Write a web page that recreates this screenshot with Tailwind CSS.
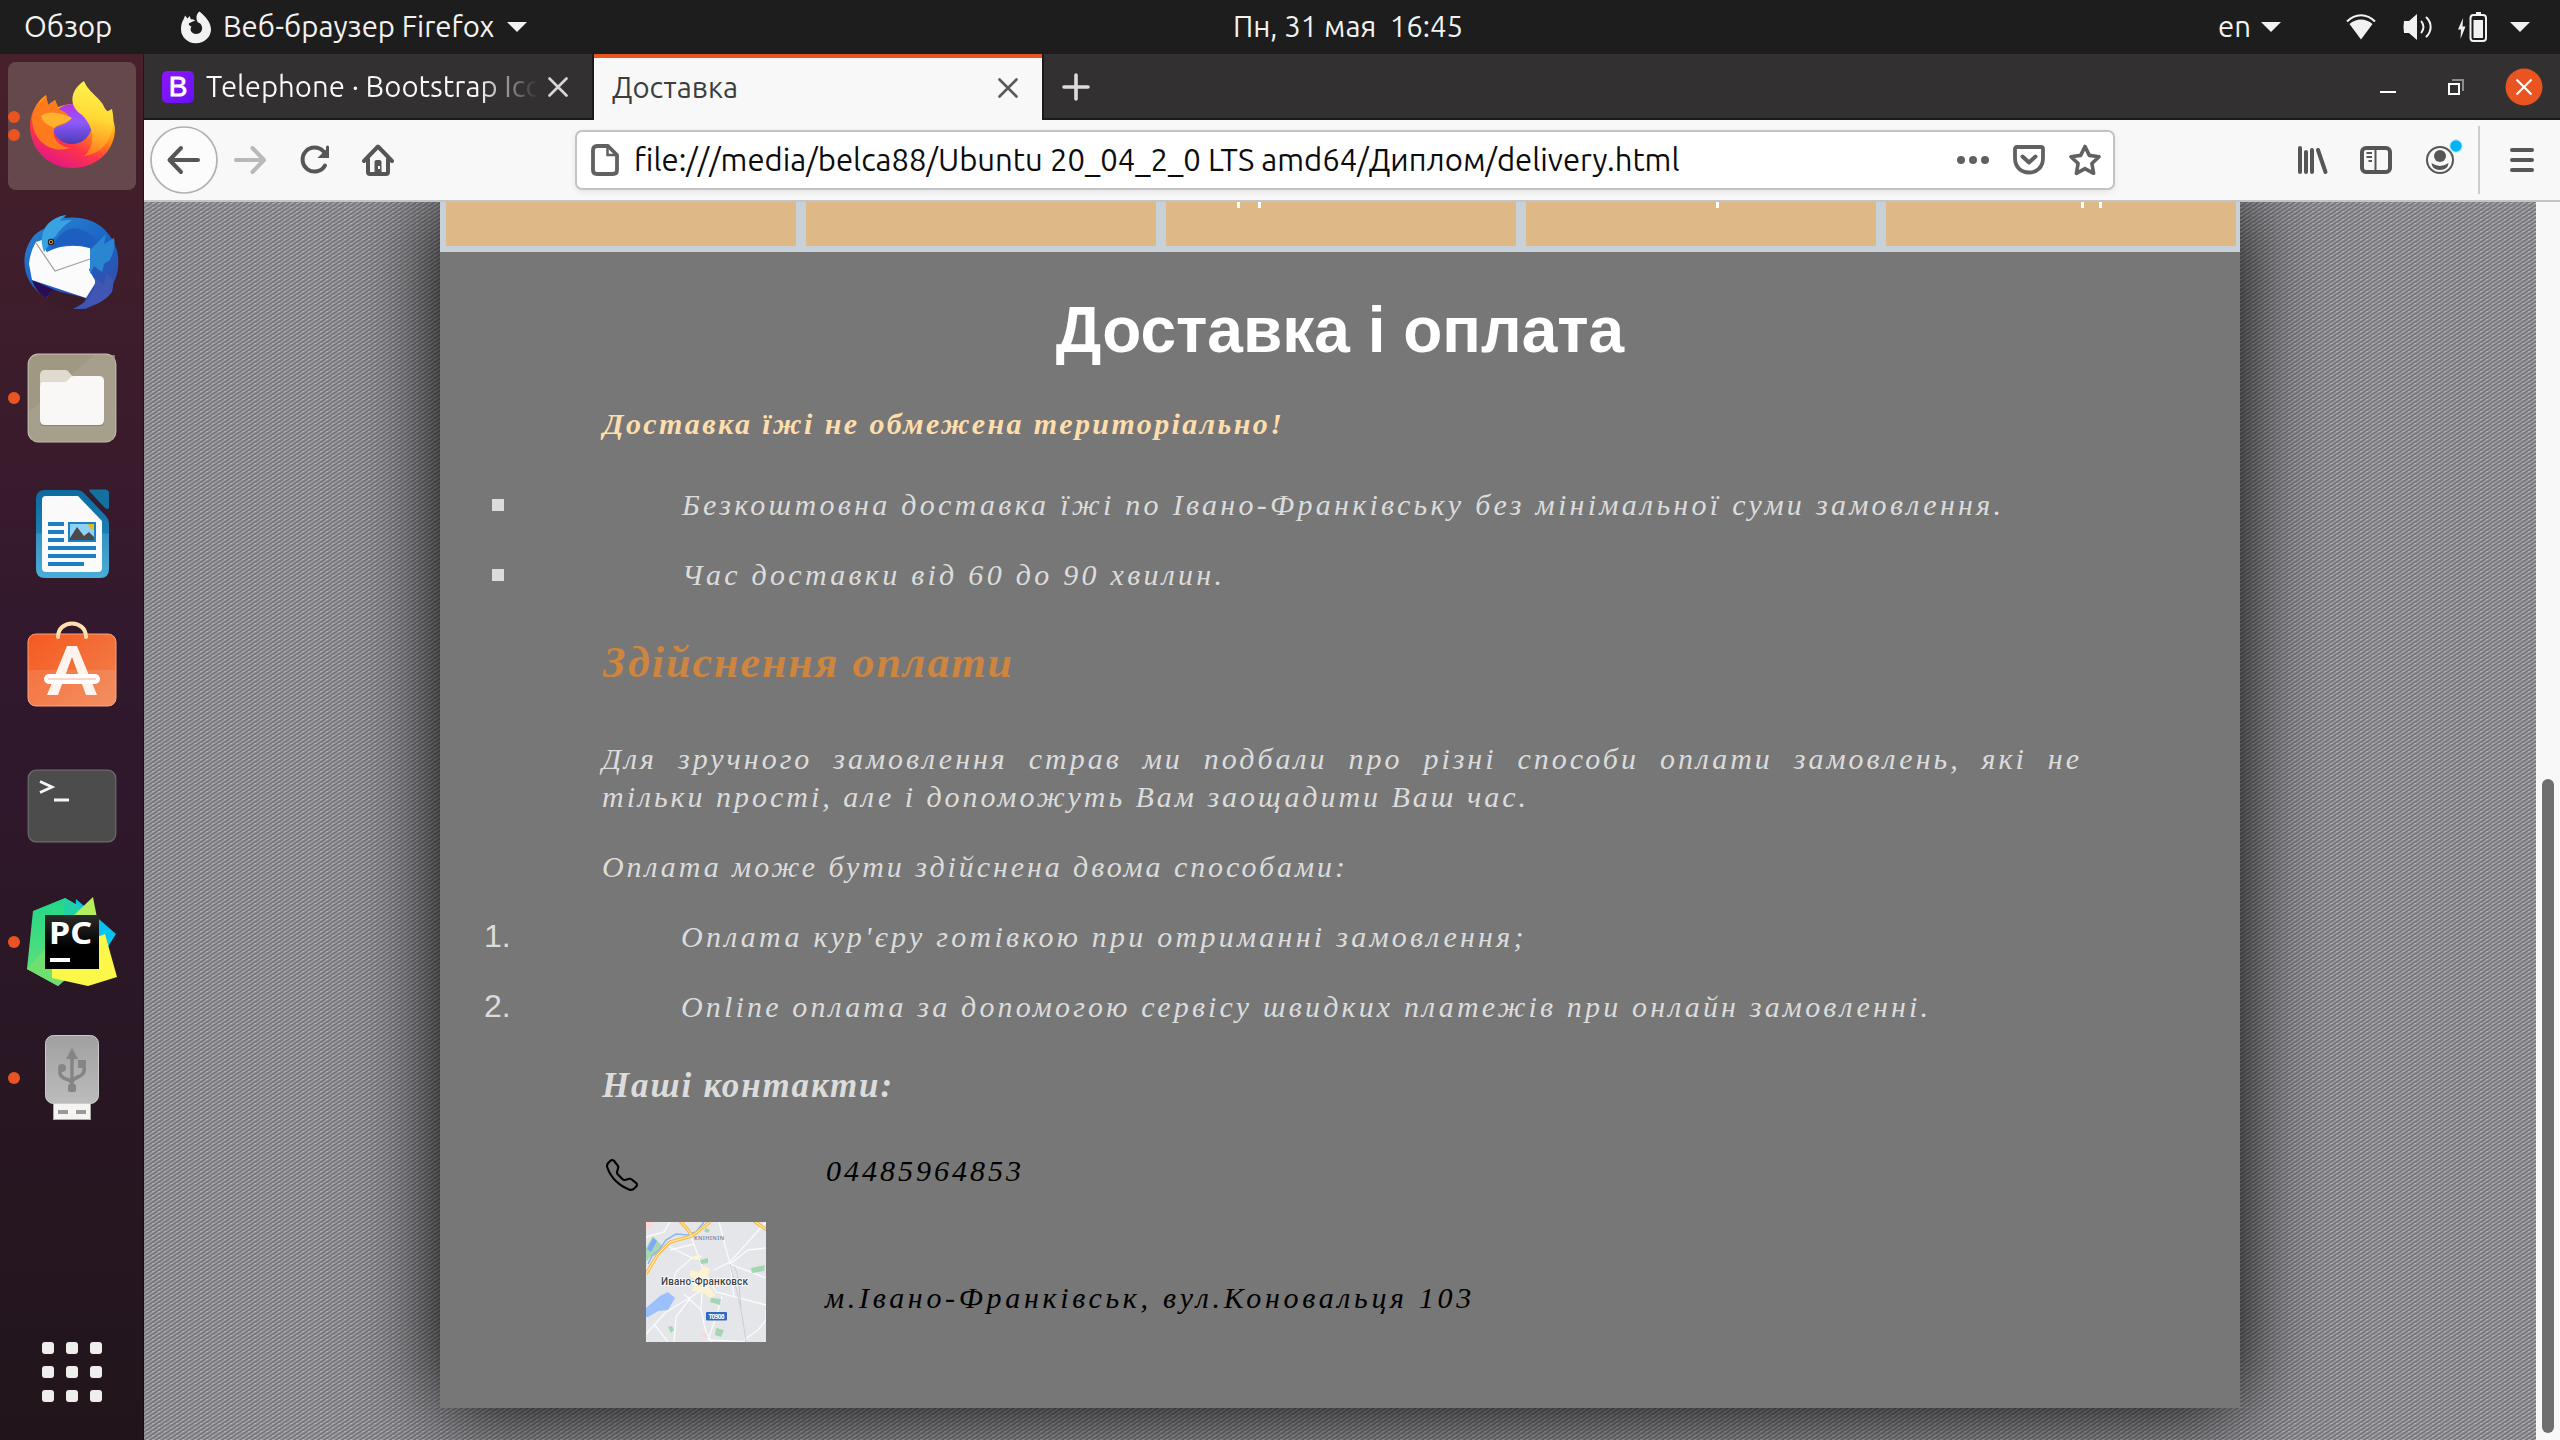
<!DOCTYPE html>
<html lang="uk">
<head>
<meta charset="utf-8">
<title>Доставка</title>
<script src="https://cdn.jsdelivr.net/npm/@tailwindcss/browser@4"></script>
</head>
<body class="w-[2560px] h-[1440px] overflow-hidden bg-black font-['Ubuntu','Noto_Sans',sans-serif] text-[29.33px]">
<div class="flex flex-col w-[2560px] h-[1440px]">

<!-- System bar -->
<header class="relative flex items-center justify-between h-[54px] shrink-0 bg-[#1d1d1d] text-[#f2f2f2] leading-[54px] whitespace-pre">
  <div class="flex items-center pl-[24px]">
    <span class="w-[156px]">Обзор</span>
    <svg class="w-[32px] h-[34px]" viewBox="0 0 32 34"><path fill="#f2f2f2" d="M19.500 1.500C25 6 31 12 31 19.500A15 14 0 0 1 1 19C1 14 2.500 11 4 8.500L5 5.500L7.500 8.500L9.500 6L11 9.500C13 9 14.500 10 15 11C12.500 11 11.500 12.500 9.500 13C7.500 14 10 16 11.500 16.500C9 20 12 24 16 24C21 24 24 19 21 14.500C20 13 18.500 12.500 18 12.500C15.500 9 16 4 19.500 1.500Z"/></svg>
    <span class="ml-[11px] w-[274px]">Веб-браузер Firefox</span>
    <svg class="ml-[10px] w-[20px] h-[10px]" viewBox="0 0 20 10"><path fill="#f2f2f2" d="M0 0H20L10 10Z"/></svg>
  </div>
  <div class="absolute left-[1233px]">Пн, 31 мая  16:45</div>
  <div class="flex items-center pr-[30px]">
    <span class="w-[43px]">en</span>
    <svg class="w-[20px] h-[10px]" viewBox="0 0 20 10"><path fill="#f2f2f2" d="M0 0H20L10 10Z"/></svg>
    <svg class="ml-[64px] w-[32px] h-[26px]" viewBox="0 0 32 26"><path fill="none" stroke="#f2f2f2" stroke-width="2" d="M2 7.500C10 -1 22 -1 30 7.500"/><path fill="#f2f2f2" d="M4.500 10C11 4 21 4 27.500 10L16 25.500Z"/></svg>
    <svg class="ml-[26px] w-[30px] h-[28px]" viewBox="0 0 30 28"><path fill="#f2f2f2" d="M1 8H6L14 1V27L6 20H1Q0 14 1 8Z"/><path fill="none" stroke="#f2f2f2" stroke-width="2" stroke-linecap="round" d="M18.500 8.500C21 12 21 16 18.500 19.500M23.500 4.500C29 10 29 18 23.500 23.500"/></svg>
    <svg class="ml-[25px] w-[30px] h-[30px]" viewBox="0 0 30 30"><path fill="#f2f2f2" d="M5 6L0 17.500H3L2.500 27L7.500 14.500H4.500ZM18 0H23V3H18Z"/><rect x="12.500" y="3" width="15.500" height="26" rx="3" fill="none" stroke="#f2f2f2" stroke-width="2"/><rect x="15.500" y="8" width="9.500" height="18" fill="#f2f2f2"/></svg>
    <svg class="ml-[22px] w-[20px] h-[10px]" viewBox="0 0 20 10"><path fill="#f2f2f2" d="M0 0H20L10 10Z"/></svg>
  </div>
</header>

<div class="flex flex-1 min-h-0">
<!-- Dock -->
<aside class="flex flex-col w-[144px] shrink-0 pt-1 bg-linear-to-b from-[#47202a] via-[#31182d] via-45% to-[#21151b] border-r border-black/40">
  <div class="relative flex items-center h-[136px] pl-[24px]">
    <div class="absolute left-[8px] top-[4px] w-[128px] h-[128px] rounded-[8px] bg-[#65484c]"></div>
    <div class="absolute left-[8px] top-[53px] size-[12px] rounded-full bg-[#e95420]"></div>
    <div class="absolute left-[8px] top-[71px] size-[12px] rounded-full bg-[#e95420]"></div>
    <svg class="relative size-[96px]" viewBox="0 0 96 96">
      <defs>
        <linearGradient id="fa" x1=".85" y1=".1" x2=".3" y2="1"><stop offset="0" stop-color="#fff44f"/><stop offset=".35" stop-color="#ff980e"/><stop offset=".65" stop-color="#ff3647"/><stop offset="1" stop-color="#e31587"/></linearGradient>
        <linearGradient id="fb" x1=".5" y1="0" x2=".5" y2="1"><stop offset="0" stop-color="#b833e1"/><stop offset=".45" stop-color="#9059ff"/><stop offset="1" stop-color="#4b3cb5"/></linearGradient>
        <linearGradient id="fc" x1=".6" y1="0" x2=".5" y2="1"><stop offset="0" stop-color="#fff44f"/><stop offset=".5" stop-color="#ffd935"/><stop offset="1" stop-color="#ff7a1c"/></linearGradient>
      </defs>
      <path fill="url(#fa)" d="M6 48C6 36 12 24 22 17L24 27L31 22L34 29C44 25 60 24 70 30L76 26C88 36 91 44 91 52C90 75 70 90 49 90C25 90 6 72 6 48Z"/>
      <circle cx="48" cy="46" r="20" fill="url(#fb)"/>
      <path fill="url(#fc)" d="M60 3C65 16 79 20 82 34L88 31C94 56 80 76 60 78C70 70 73 52 58 37C44 28 46 12 60 3Z"/>
      <path fill="#ff7a1c" d="M8 40C10 28 20 23 22 17L24 27L31 22L34 31C38 32 43 35 47 40C41 49 34 46 30 51C28 60 34 68 46 70C28 76 8 64 8 40Z"/>
      <path fill="#ffb32e" d="M17 38C24 32 36 34 48 40C42 47 34 45 30 50C24 47 18 44 17 38Z"/>
    </svg>
  </div>
  <div class="relative flex items-center h-[136px] pl-[24px]">
    <svg class="size-[96px]" viewBox="0 0 96 96">
      <defs><linearGradient id="ta" x1=".2" y1="0" x2=".8" y2="1"><stop offset="0" stop-color="#2a83d0"/><stop offset=".5" stop-color="#1b62c4"/><stop offset="1" stop-color="#3a48a3"/></linearGradient></defs>
      <path fill="url(#ta)" d="M24 10Q30 3 42 1L40 4Q80 0 93 36Q101 74 62 95H49Q58 91 60 87L22 84Q-3 68 1 40Q6 20 20 15Z"/>
      <path fill="#2a0d55" d="M8 66L40 80L60 86L28 77L22 84Q12 78 8 66Z"/>
      <path fill="#3b1c2a" d="M22 85L28 76L62 84L60 89L48 96Q33 96 22 85Z"/>
      <path fill="#3c2a93" d="M30 36Q48 28 64 34L68 40Z"/>
      <path fill="#fbfbfc" d="M12 28L18 26Q21 36 23 38Q42 28 66 34Q70 48 65 56L72 68L62 84L8 66L5 50Q6 38 12 28Z"/>
      <path fill="none" stroke="#a2a2a6" stroke-width="1.300" d="M12 29L31 57L66 45"/>
      <path fill="#38a3e0" d="M20 38Q14 22 24 10Q31 3 42 1Q37 4 36 7Q42 6 48 6Q36 14 32 22Q26 26 24 32Z"/>
      <path fill="#1d5fc0" d="M32 26Q44 10 58 16Q72 22 84 38L74 50L66 34Q46 26 26 36Z"/>
      <path fill="#2b86d2" d="M66 36L82 20L80 30L90 24Q92 34 86 46L80 50L78 58L70 52L66 60Z"/>
      <path fill="#3f57b2" d="M66 82Q72 74 71 64L80 70L82 60Q92 62 88 78Q76 94 49 95Q60 90 66 82Z"/>
      <circle cx="27" cy="28" r="3.200" fill="#1a1320"/><circle cx="27" cy="28" r="1.800" fill="none" stroke="#e8a120" stroke-width="1"/>
    </svg>
  </div>
  <div class="relative flex items-center h-[136px] pl-[24px]">
    <div class="absolute left-[8px] top-[62px] size-[12px] rounded-full bg-[#e95420]"></div>
    <svg class="size-[96px]" viewBox="0 0 96 96">
      <rect x="4.200" y="4.200" width="87.600" height="87.600" rx="10" fill="#9f9883" stroke="#c4bfae" stroke-width="1.200"/>
      <path fill="#aaa38f" d="M91 5H70L5 62V84Q6 91 14 91H84Q91 90 91 83Z" opacity=".7"/>
      <path fill="#6f6856" opacity=".5" d="M16 68V72Q16 76 20 76H76Q80 76 80 72V68Z"/>
      <path fill="#dfdccf" d="M16 34V25Q16 20 21 20H41Q43 20 44 21L49 27V34Z"/>
      <path fill="#f9f8f7" d="M16 36Q16 32 20 32H40Q42 32 43 31L47 27Q48 26 50 26H75Q80 26 80 31V70Q80 75 75 75H21Q16 75 16 70Z"/>
    </svg>
  </div>
  <div class="relative flex items-center h-[136px] pl-[24px]">
    <svg class="size-[96px]" viewBox="0 0 96 96">
      <defs><linearGradient id="wa" x1="0" y1="0" x2="0" y2="1"><stop offset="0" stop-color="#0d6a9f"/><stop offset=".49" stop-color="#1a7fb3"/><stop offset=".5" stop-color="#3692c2"/><stop offset="1" stop-color="#49add9"/></linearGradient></defs>
      <path fill="url(#wa)" d="M12 13Q12 4 21 4H52Q57 4 60 7L81 29Q85 33 85 38V83Q85 92 76 92H21Q12 92 12 83Z"/>
      <path fill="#13709f" d="M66 3.500H81Q85 3.500 85 7.500V22Q84 24 81 22L66 6Q64 4 66 3.500Z"/>
      <path fill="#fafafa" d="M18 14Q18 10 22 10H54L78 35V82Q78 86 74 86H22Q18 86 18 82Z"/>
      <g fill="#1b81c0"><path d="M24 36H40V40H24ZM24 44H40V48H24ZM24 52H40V56H24ZM24 60H72V64H24ZM24 68H72V72H24ZM24 76H60V80H24ZM44 36H72V56H44Z"/></g>
      <path fill="#8fd0f5" d="M46 38H70V54H46Z"/><path fill="#e8b90e" d="M64 38H70V44Q65 43 64 38Z"/><path fill="#4a4a4a" d="M46 54V52L53 41L60 50L65 46L70 51V54Z"/>
    </svg>
  </div>
  <div class="relative flex items-center h-[136px] pl-[24px]">
    <svg class="size-[96px] overflow-visible" viewBox="0 0 96 96">
      <defs><linearGradient id="sa" x1="0" y1="0" x2="1" y2="1"><stop offset="0" stop-color="#f55a20"/><stop offset="1" stop-color="#f18350"/></linearGradient></defs>
      <rect x="4" y="12" width="88" height="72" rx="8" fill="url(#sa)" stroke="#f9a27c" stroke-width="1"/>
      <path fill="#fff" opacity=".1" d="M4 48H92V77Q92 84 85 84H11Q4 84 4 77Z"/>
      <path fill="none" stroke="#fde0b0" stroke-width="4" stroke-linecap="round" d="M34 15C34 -3 62 -3 62 15"/>
      <path fill="#fdf4ee" d="M43 24H53L73 73H62L48 35L34 73H23Z"/>
      <rect x="20" y="52" width="56" height="10" rx="5" fill="#fff"/><rect x="24" y="56" width="48" height="2" fill="#fbd5c9"/>
    </svg>
  </div>
  <div class="relative flex items-center h-[136px] pl-[24px]">
    <svg class="size-[96px]" viewBox="0 0 96 96">
      <rect x="4.200" y="12.200" width="87.600" height="71.600" rx="8" fill="#4c4c4c" stroke="#6c6c6c" stroke-width="1.200"/>
      <path fill="none" stroke="#f6f6f6" stroke-width="2.800" d="M16 23.500L28 29L16 34.500M30 42H45"/>
    </svg>
  </div>
  <div class="relative flex items-center h-[136px] pl-[24px]">
    <div class="absolute left-[8px] top-[62px] size-[12px] rounded-full bg-[#e95420]"></div>
    <svg class="size-[96px]" viewBox="0 0 96 96">
      <defs><linearGradient id="pa" x1="0" y1="0" x2="0" y2="1"><stop offset="0" stop-color="#21d789"/><stop offset="1" stop-color="#68e177"/></linearGradient><linearGradient id="pb" x1="0" y1="0" x2="0" y2="1"><stop offset="0" stop-color="#2b2b2b"/><stop offset=".6" stop-color="#000"/></linearGradient></defs>
      <path fill="#07c3f2" d="M52 5L92 40L78 62L50 50Z"/>
      <path fill="url(#pa)" d="M9 17L41 4L60 15V70L34 92L3 75Z"/>
      <path fill="#22d0a8" d="M41 4L60 15L52 24L40 22Z"/>
      <path fill="#b5f05c" d="M69 3L73 24V40H38L49 22Z"/><path fill="#6fe070" d="M3 75L22 54L40 86L34 92Z"/>
      <path fill="#fcf84a" d="M81 40L93 83L64 92L28 84V60Z"/>
      <rect x="21" y="21" width="54" height="54" fill="url(#pb)"/><rect x="26" y="64" width="20" height="4" fill="#fff"/>
      <text x="25" y="50" font-family="Noto Sans" font-weight="700" font-size="31" textLength="43" lengthAdjust="spacingAndGlyphs" fill="#fff">PC</text>
    </svg>
  </div>
  <div class="relative flex items-center h-[136px] pl-[24px]">
    <div class="absolute left-[8px] top-[62px] size-[12px] rounded-full bg-[#e95420]"></div>
    <svg class="size-[96px]" viewBox="0 0 96 96">
      <defs><linearGradient id="ua" x1="0" y1="0" x2="0" y2="1"><stop offset="0" stop-color="#a0a0a0"/><stop offset="1" stop-color="#bcbcbc"/></linearGradient></defs>
      <rect x="29.500" y="70" width="37" height="19.500" fill="#f5f4f2" stroke="#aaa" stroke-width="1"/>
      <path fill="#999" d="M34 80H44V84H34ZM52 80H62V84H52Z"/>
      <rect x="21.500" y="5.500" width="53" height="68" rx="8" fill="url(#ua)" stroke="#ccc"/>
      <g fill="#858585"><path d="M48 18L54 29H42Z"/><circle cx="38" cy="38" r="4"/><path d="M54 30H62V38H54Z"/><rect x="44" y="54" width="8" height="8" rx="2"/></g>
      <path fill="none" stroke="#858585" stroke-width="3.500" d="M48 27V56M36 40Q35 47 42 49Q47 50 48 54M60 36Q62 44 54 47Q49 49 48 52"/>
    </svg>
  </div>
  <div class="grid grid-cols-3 gap-[12px] w-[60px] ml-[42px] mt-[196px]">
    <i class="size-[12px] rounded-[3px] bg-[#eeeeec]"></i><i class="size-[12px] rounded-[3px] bg-[#eeeeec]"></i><i class="size-[12px] rounded-[3px] bg-[#eeeeec]"></i>
    <i class="size-[12px] rounded-[3px] bg-[#eeeeec]"></i><i class="size-[12px] rounded-[3px] bg-[#eeeeec]"></i><i class="size-[12px] rounded-[3px] bg-[#eeeeec]"></i>
    <i class="size-[12px] rounded-[3px] bg-[#eeeeec]"></i><i class="size-[12px] rounded-[3px] bg-[#eeeeec]"></i><i class="size-[12px] rounded-[3px] bg-[#eeeeec]"></i>
  </div>
</aside>

<!-- Browser window -->
<div class="flex flex-col flex-1 min-w-0">
  <!-- Tabs -->
  <div class="flex h-[66px] shrink-0 bg-[#323031] leading-[64px] whitespace-nowrap">
    <div class="flex items-center w-[450px] pl-[18px] pt-[2px] border-b-2 border-r-2 border-[#1b1a1b]">
      <div class="flex items-center justify-center size-[32px] rounded-[5px] bg-linear-to-br from-[#9013fe] to-[#6610f2] text-white font-['Liberation_Sans'] text-[28px] [-webkit-text-stroke:0.800px_#fff]">B</div>
      <div class="ml-[12px] w-[332px] overflow-hidden bg-linear-to-r from-[#f9f9fa] from-82% to-[#f9f9fa]/0 to-100% bg-clip-text text-transparent">Telephone · Bootstrap Icons</div>
      <svg class="ml-[10px] size-[20px]" viewBox="0 0 20 20"><path stroke="#d8d8d8" stroke-width="2.600" stroke-linecap="round" d="M1.500 1.500L18.500 18.500M18.500 1.500L1.500 18.500"/></svg>
    </div>
    <div class="flex items-center justify-between w-[448px] pl-[18px] pr-[24px] border-t-4 border-[#e95420] bg-[#f8f8f8] text-[#3d3d3d]">
      <span class="mt-[-2px]">Доставка</span>
      <svg class="size-[20px] mt-[-2px]" viewBox="0 0 20 20"><path stroke="#5a5a5a" stroke-width="2.600" stroke-linecap="round" d="M1.500 1.500L18.500 18.500M18.500 1.500L1.500 18.500"/></svg>
    </div>
    <div class="flex flex-1 items-center border-b-2 border-l-2 border-[#1b1a1b] pt-[2px] pl-[18px] pr-[17px]">
      <svg class="size-[28px]" viewBox="0 0 28 28"><path stroke="#dcdcdc" stroke-width="3.600" stroke-linecap="round" d="M2 14H26M14 2V26"/></svg>
      <div class="ml-auto mt-[10px] w-[16px] h-[2px] bg-white"></div>
      <svg class="ml-[52px] size-[16px]" viewBox="0 0 16 16"><path fill="none" stroke="#8b8b8b" stroke-width="2" d="M4 1H15V12"/><rect x="1" y="5" width="10" height="10" fill="none" stroke="#fff" stroke-width="2"/></svg>
      <svg class="ml-[41px] size-[38px]" viewBox="0 0 38 38"><circle cx="19" cy="19" r="18.500" fill="#e95420"/><path stroke="#fff" stroke-width="2.200" d="M11.500 11.500L26.500 26.500M26.500 11.500L11.500 26.500"/></svg>
    </div>
  </div>
  <!-- Toolbar -->
  <div class="flex items-center h-[82px] shrink-0 pl-[6px] bg-[#f8f8f8] border-b-2 border-[#c4c4c6]">
    <svg class="size-[68px]" viewBox="0 0 68 68"><circle cx="34" cy="34" r="33" fill="#fcfcfc" stroke="#b1b1b1" stroke-width="1.700"/><path fill="none" stroke="#565656" stroke-width="4" stroke-linecap="round" stroke-linejoin="round" d="M48 34H20M31 22L19.500 34L31 46"/></svg>
    <svg class="ml-[16px] size-[32px]" viewBox="0 0 32 32"><path fill="none" stroke="#b8b8b8" stroke-width="4" stroke-linecap="round" stroke-linejoin="round" d="M2 16H28M18.500 4L30 16L18.500 28"/></svg>
    <svg class="ml-[33px] size-[32px]" viewBox="0 0 32 32"><path fill="none" stroke="#565656" stroke-width="4" stroke-linecap="round" d="M26 21.500A12 12 0 1 1 24.500 7.500"/><path fill="#565656" d="M30 2.500V14H18.500Z"/><path stroke="#565656" stroke-width="3" stroke-linecap="round" d="M28.500 3V12"/></svg>
    <svg class="ml-[31px] size-[32px]" viewBox="0 0 32 32"><path fill="none" stroke="#565656" stroke-width="4" stroke-linecap="round" stroke-linejoin="round" d="M2 17L16 2.500L30 17M6 15V28Q6 30 8 30H24Q26 30 26 28V15"/><path fill="#565656" d="M12.500 18Q12.500 16 14.500 16H17.500Q19.500 16 19.500 18V30H12.500Z"/><rect x="16" y="22" width="2" height="3" fill="#f8f8f8"/></svg>
    <div class="flex items-center ml-[181px] w-[1540px] h-[60px] rounded-[7px] border-2 border-[#c3c3c3] bg-white shadow-[0_2px_6px_rgba(0,0,0,0.08)] pl-[12px] pr-[12px]">
      <svg class="size-[32px]" viewBox="0 0 32 32"><path fill="none" stroke="#616161" stroke-width="3.800" stroke-linejoin="round" d="M4 6Q4 2 8 2H19L28 11V26Q28 30 24 30H8Q4 30 4 26Z"/><path fill="none" stroke="#616161" stroke-width="2.500" d="M18.500 2V11H28"/></svg>
      <span class="ml-[13px] text-[31.070px] text-[#0c0c0d] whitespace-nowrap">file:///media/belca88/Ubuntu 20_04_2_0 LTS amd64/Диплом/delivery.html</span>
      <svg class="ml-auto w-[32px] h-[8px]" viewBox="0 0 32 8"><g fill="#616161"><circle cx="4" cy="4" r="4"/><circle cx="16" cy="4" r="4"/><circle cx="28" cy="4" r="4"/></g></svg>
      <svg class="ml-[24px] size-[32px]" viewBox="0 0 32 32"><path fill="none" stroke="#616161" stroke-width="3.800" stroke-linejoin="round" d="M2 5Q2 3 4 3H28Q30 3 30 5V14C30 23 24 28.500 16 28.500S2 23 2 14Z"/><path fill="none" stroke="#616161" stroke-width="4" stroke-linecap="round" stroke-linejoin="round" d="M9.500 12.500L16 18.500L22.500 12.500"/></svg>
      <svg class="ml-[24px] size-[32px]" viewBox="0 0 32 32"><path fill="none" stroke="#616161" stroke-width="3.600" stroke-linejoin="round" d="M16 2.500L20.300 11.400L30 12.700L22.900 19.500L24.600 29.300L16 24.600L7.400 29.300L9.100 19.500L2 12.700L11.700 11.400Z"/></svg>
    </div>
    <svg class="ml-[182px] size-[32px]" viewBox="0 0 32 32"><path stroke="#565656" stroke-width="4" stroke-linecap="round" fill="none" d="M3 4V28M9 8V28M15 6V28M21 6L28.500 28"/></svg>
    <svg class="ml-[31px] size-[32px]" viewBox="0 0 32 32"><rect x="2" y="4" width="28" height="24" rx="4" fill="none" stroke="#565656" stroke-width="4"/><path stroke="#565656" stroke-width="2" d="M15.500 4V28M6.500 9H12M6.500 13H12M8.500 17H12"/></svg>
    <svg class="ml-[31px] w-[40px] h-[44px]" viewBox="0 0 40 44"><circle cx="17" cy="22" r="13" fill="none" stroke="#565656" stroke-width="2"/><circle cx="17" cy="18" r="6" fill="#565656"/><path fill="#565656" d="M8.500 25Q17 31 25.500 25Q25 32 17 32Q9 32 8.500 25Z"/><circle cx="33" cy="8" r="7" fill="#c9eefc"/><circle cx="33" cy="8" r="5.700" fill="#00b3f4"/></svg>
    <div class="ml-[15px] w-[2px] h-[68px] bg-[#cecece]"></div>
    <svg class="ml-[29px] w-[26px] h-[24px]" viewBox="0 0 26 24"><path stroke="#565656" stroke-width="4" stroke-linecap="round" d="M3 2H23M3 12H23M3 22H23"/></svg>
  </div>

  <!-- Page -->
  <div class="flex flex-1 min-h-0">
    <main class="w-[2392px] overflow-hidden pl-[296px] bg-[#76757a] bg-[url('data:image/svg+xml,%3Csvg%20xmlns=%22http://www.w3.org/2000/svg%22%20width=%226%22%20height=%224%22%3E%3Cpath%20d=%22M-3%206L9%20-2M-3%202L3%20-2M3%206L9%202%22%20stroke=%22%239e9da1%22%20stroke-width=%221.5%22/%3E%3Cpath%20d=%22M2%201h2v1h-2z%22%20fill=%22%23aeadb0%22/%3E%3C/svg%3E')]">
      <div class="w-[1800px] h-[1206px] bg-[#777777] shadow-[0_0_80px_#000]">
        <nav class="flex gap-[10px] h-[50px] pl-[6px] pr-[4px] pb-[6px] bg-[#c8d0d8]">
          <div class="w-[350px] bg-[#deb887]"></div>
          <div class="w-[350px] bg-[#deb887]"></div>
          <div class="flex w-[350px] bg-[#deb887] pl-[71px] gap-[18px]"><i class="w-[3px] h-[6px] bg-white"></i><i class="w-[3px] h-[6px] bg-white"></i></div>
          <div class="w-[350px] bg-[#deb887] pl-[190px]"><i class="block w-[3px] h-[6px] bg-white"></i></div>
          <div class="flex w-[350px] bg-[#deb887] pl-[195px] gap-[15px]"><i class="w-[3px] h-[6px] bg-white"></i><i class="w-[3px] h-[6px] bg-white"></i></div>
        </nav>
        <article class="pt-[41px] text-[#dcdcdc] text-[30px] italic leading-[38px] font-['Monotype_Corsiva','Z003','Liberation_Serif',serif]">
          <h1 class="text-center not-italic font-bold font-['Liberation_Sans'] text-[64px] leading-[74px] text-white">Доставка і оплата</h1>
          <p class="mt-[38px] pl-[163px] font-bold text-[#ffdead] tracking-[2.420px]">Доставка їжі не обмежена територіально!</p>
          <ul class="mt-[43px] flex flex-col gap-[32px]">
            <li class="flex"><i class="w-[12px] h-[12px] ml-[52px] mt-[13px] mr-[178px] bg-[#dcdcdc]"></i><span class="tracking-[3.280px]">Безкоштовна доставка їжі по Івано-Франківську без мінімальної суми замовлення.</span></li>
            <li class="flex"><i class="w-[12px] h-[12px] ml-[52px] mt-[13px] mr-[178px] bg-[#dcdcdc]"></i><span class="tracking-[3.280px]">Час доставки від 60 до 90 хвилин.</span></li>
          </ul>
          <h2 class="mt-[40px] pl-[163px] font-bold text-[44px] leading-[58px] tracking-[1.990px] text-[#cd853f]">Здійснення оплати</h2>
          <p class="mt-[48px] ml-[162px] w-[1480px] tracking-[2.970px]"><span class="block [text-align-last:justify]">Для зручного замовлення страв ми подбали про різні способи оплати замовлень, які не</span>тільки прості, але і допоможуть Вам заощадити Ваш час.</p>
          <p class="mt-[32px] pl-[162px] tracking-[2.920px]">Оплата може бути здійснена двома способами:</p>
          <ol class="mt-[32px] flex flex-col gap-[32px]">
            <li class="flex"><span class="w-[200px] mt-[-1px] pl-[44px] not-italic font-['Liberation_Sans'] text-[32px]">1.</span><span class="pl-[41px] tracking-[3.250px]">Оплата кур'єру готівкою при отриманні замовлення;</span></li>
            <li class="flex"><span class="w-[200px] mt-[-1px] pl-[44px] not-italic font-['Liberation_Sans'] text-[32px]">2.</span><span class="pl-[41px] tracking-[3.160px]">Online оплата за допомогою сервісу швидких платежів при онлайн замовленні.</span></li>
          </ol>
          <h3 class="mt-[38px] pl-[162px] font-bold text-[35px] leading-[44px] tracking-[1.850px]">Наші контакти:</h3>
          <div class="mt-[43px] flex items-start h-[38px] pl-[166px] text-black">
            <svg class="size-[32px] mt-[8px]" viewBox="0 0 16 16" fill="#000"><path d="M3.654 1.328a.678.678 0 0 0-1.015-.063L1.605 2.300c-.483.484-.661 1.169-.450 1.770a17.568 17.568 0 0 0 4.168 6.608 17.569 17.569 0 0 0 6.608 4.168c.601.211 1.286.033 1.770-.450l1.034-1.034a.678.678 0 0 0-.063-1.015l-2.307-1.794a.678.678 0 0 0-.580-.122l-2.190.547a1.745 1.745 0 0 1-1.657-.459L5.482 8.062a1.745 1.745 0 0 1-.460-1.657l.548-2.190a.678.678 0 0 0-.122-.580L3.654 1.328zM1.884.511a1.745 1.745 0 0 1 2.612.163L6.290 2.980c.329.423.445.974.315 1.494l-.547 2.190a.678.678 0 0 0 .178.643l2.457 2.457a.678.678 0 0 0 .644.178l2.189-.547a1.745 1.745 0 0 1 1.494.315l2.306 1.794c.829.645.905 1.870.163 2.611l-1.034 1.034c-.740.740-1.846 1.065-2.877.702a18.634 18.634 0 0 1-7.010-4.420 18.634 18.634 0 0 1-4.420-7.009c-.362-1.030-.037-2.137.703-2.877L1.885.511z"/></svg>
            <span class="ml-[188px] mt-[1px] tracking-[3px]">04485964853</span>
          </div>
          <div class="mt-[33px] flex pl-[206px] text-black">
            <svg class="size-[120px]" viewBox="0 0 120 120">
              <rect width="120" height="120" fill="#e4e6ea"/>
              <g fill="none" stroke="#fafbfc" stroke-width="1.300"><path d="M0 15L18 10L24 0M45 14L56 45L70 70L120 83M73 0L84 42L88 75M120 0L84 40L68 48M84 42L120 56M84 42L102 28L120 26M22 24L46 36L30 50L28 56L60 66M46 36L56 34M24 28L48 22M60 66L45 75L30 95L28 120M45 75L20 90L0 112M38 72L55 88L60 110L66 120M56 70L55 88M76 74L70 95L62 118L100 120M8 102L22 120M120 88V98L112 108L98 118"/></g>
              <path fill="none" stroke="#cbced3" stroke-width="1" d="M84 42C88 60 95 80 100 120M88 44C94 54 93 70 95 85"/>
              <path fill="#a8d7b4" d="M0 26L7 14L16 24L14 32L5 34L0 40Z"/>
              <path fill="none" stroke="#8ab4f8" stroke-width="1.500" d="M58 0L50 10L42 13L30 12L20 18L13 28L6 34L2 42"/><path fill="#7baaf7" d="M7 16L11 19L5 30L1 27Z"/>
              <path fill="#9cc0fb" d="M0 86L14 74L22 70L29 76L22 88L12 89L2 95H0Z"/>
              <path fill="none" stroke="#f6bf4f" stroke-width="3.400" d="M0 52L12 32L24 20L46 14L64 0M34 -1L42 8L46 14M108 -1L121 8"/><path fill="none" stroke="#fff0bd" stroke-width="1" d="M0 52L12 32L24 20L46 14L64 0M34 -1L42 8L46 14M108 -1L121 8"/>
              <path fill="#fdf3d3" d="M44 48L52 50L58 44L64 47L62 54L58 58L64 66L70 73L64 76L58 71L46 69L50 58L44 54ZM48 34H53V38H48Z"/>
              <path fill="#a3d6b2" d="M60 6L64 8L62 11L58 9ZM54 38L62 36L62 41L55 42ZM105 46L119 43L118 49L106 51ZM65 76L75 77L74 83L64 80ZM70 106L78 108L75 115L69 113ZM22 105L26 104L28 108L25 111Z"/>
              <path fill="#fad9d6" d="M0 0H7L6 6L0 7ZM56 110L61 112L60 116L55 114Z"/>
              <text x="48" y="18" font-family="Noto Sans" font-style="normal" font-size="5.500" font-weight="600" textLength="30" letter-spacing="0" fill="#7485a8">KNIHININ</text>
              <text x="15" y="62.500" font-family="Roboto" font-style="normal" font-size="10" font-weight="500" textLength="87" letter-spacing="0" fill="#3c4043" stroke="#fff" stroke-width="1.500" paint-order="stroke">Ивано-Франковск</text>
              <rect x="60" y="90" width="21" height="8.500" rx="1" fill="#2e6cc4"/><text x="62.500" y="96.800" font-family="Noto Sans" font-style="normal" font-size="6.500" font-weight="700" textLength="16" letter-spacing="0" fill="#fff">T0906</text>
            </svg>
            <span class="ml-[59px] mt-[57px] tracking-[3.680px]">м.Івано-Франківськ, вул.Коновальця 103</span>
          </div>
        </article>
      </div>
    </main>
    <div class="flex-1 bg-[#f8f8f8] pt-[577px] pl-[6px]"><div class="w-[12px] h-[654px] rounded-full bg-[#6e6e6e]"></div></div>
  </div>
</div>
</div>
</div>
</body>
</html>
